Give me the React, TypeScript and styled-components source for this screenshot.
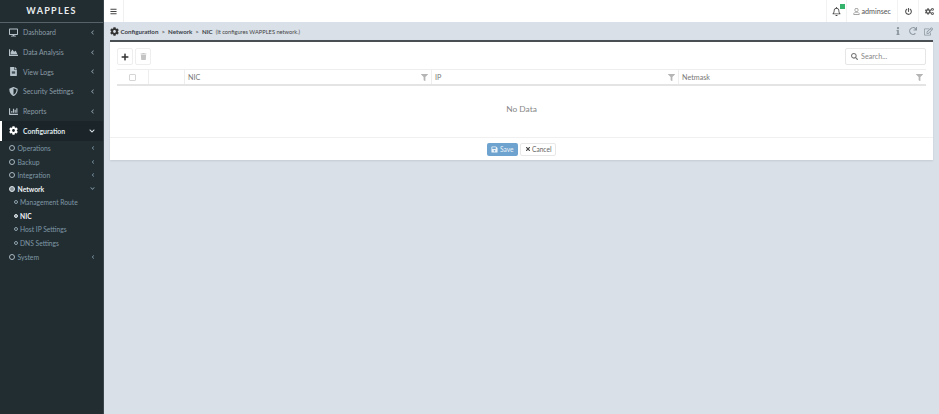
import React from 'react';
import styled, { createGlobalStyle } from 'styled-components';
import {
    FaBars,
    FaRegBell,
    FaChartArea,
    FaChartBar,
    FaCog,
    FaCogs,
    FaChevronLeft,
    FaChevronDown,
    FaDesktop,
    FaFileAlt,
    FaFilter,
    FaPlus,
    FaPowerOff,
    FaRedo,
    FaSave,
    FaSearch,
    FaShieldAlt,
    FaTimes,
    FaTrash,
    FaInfo,
    FaRegUser,
    FaRegEdit,
} from 'react-icons/fa';

const GlobalStyle = createGlobalStyle`
    html, body {
        margin: 0;
        height: 100%;
        background: #d9e0e8;
    }
    #root {
        height: 100%;
    }
    * {
        box-sizing: border-box;
    }
`;

const mainMenu = [
    { label: 'Dashboard', icon: <FaDesktop /> },
    { label: 'Data Analysis', icon: <FaChartArea /> },
    { label: 'View Logs', icon: <FaFileAlt /> },
    { label: 'Security Settings', icon: <FaShieldAlt /> },
    { label: 'Reports', icon: <FaChartBar /> },
];

const App = () => {
    return (
        <Page>
            <GlobalStyle />
            <Sidebar>
                <Logo>WAPPLES</Logo>
                {mainMenu.map((item) => (
                    <MenuItem key={item.label}>
                        <MenuIcon>{item.icon}</MenuIcon>
                        <MenuLabel>{item.label}</MenuLabel>
                        <FaChevronLeft size={5} />
                    </MenuItem>
                ))}
                <MenuItem $active>
                    <MenuIcon $active>
                        <FaCog />
                    </MenuIcon>
                    <MenuLabel>Configuration</MenuLabel>
                    <FaChevronDown size={6} />
                </MenuItem>
                <SubMenu>
                    <SubItem>
                        <Dot />
                        <SubLabel>Operations</SubLabel>
                        <FaChevronLeft size={4} />
                    </SubItem>
                    <SubItem>
                        <Dot />
                        <SubLabel>Backup</SubLabel>
                        <FaChevronLeft size={4} />
                    </SubItem>
                    <SubItem>
                        <Dot />
                        <SubLabel>Integration</SubLabel>
                        <FaChevronLeft size={4} />
                    </SubItem>
                    <SubItem $active>
                        <Dot $active />
                        <SubLabel>Network</SubLabel>
                        <FaChevronDown size={5} color="#7f98a5" />
                    </SubItem>
                    <LeafItem>
                        <SmallDot />
                        Management Route
                    </LeafItem>
                    <LeafItem $active>
                        <SmallDot $active />
                        NIC
                    </LeafItem>
                    <LeafItem>
                        <SmallDot />
                        Host IP Settings
                    </LeafItem>
                    <LeafItem>
                        <SmallDot />
                        DNS Settings
                    </LeafItem>
                    <SubItem>
                        <Dot />
                        <SubLabel>System</SubLabel>
                        <FaChevronLeft size={4} />
                    </SubItem>
                </SubMenu>
            </Sidebar>
            <Main>
                <TopBar>
                    <Hamburger>
                        <FaBars size={7} />
                    </Hamburger>
                    <TopActions>
                        <TopAction $width={20}>
                            <BellWrap>
                                <FaRegBell size={9} />
                                <Badge />
                            </BellWrap>
                        </TopAction>
                        <TopAction $width={51}>
                            <FaRegUser size={7} color="#888" />
                            adminsec
                        </TopAction>
                        <TopAction $width={21}>
                            <FaPowerOff size={7} />
                        </TopAction>
                        <TopAction $width={21}>
                            <FaCogs size={9} />
                        </TopAction>
                    </TopActions>
                </TopBar>
                <Content>
                    <Breadcrumb>
                        <FaCog size={9} color="#333" />
                        <Crumb>Configuration</Crumb>
                        <CrumbSep>&gt;</CrumbSep>
                        <Crumb>Network</Crumb>
                        <CrumbSep>&gt;</CrumbSep>
                        <Crumb>NIC</Crumb>
                        <CrumbNote>(It configures WAPPLES network.)</CrumbNote>
                        <PageTools>
                            <FaInfo size={8} />
                            <FaRedo size={8} />
                            <FaRegEdit size={9} />
                        </PageTools>
                    </Breadcrumb>
                    <Card>
                        <CardBody>
                            <Toolbar>
                                <ToolButton>
                                    <FaPlus size={8} color="#333" />
                                </ToolButton>
                                <ToolButton>
                                    <FaTrash size={7} color="#c4c4c4" />
                                </ToolButton>
                                <SearchBox>
                                    <FaSearch size={7} color="#777" />
                                    Search...
                                </SearchBox>
                            </Toolbar>
                            <TableHead>
                                <CheckCell>
                                    <CheckBox />
                                </CheckCell>
                                <BlankCell />
                                <HeadCell>
                                    NIC
                                    <FaFilter size={7} color="#b5b5b5" />
                                </HeadCell>
                                <HeadCell>
                                    IP
                                    <FaFilter size={7} color="#b5b5b5" />
                                </HeadCell>
                                <HeadCell>
                                    Netmask
                                    <FaFilter size={7} color="#b5b5b5" />
                                </HeadCell>
                            </TableHead>
                            <NoData>No Data</NoData>
                        </CardBody>
                        <Footer>
                            <SaveButton>
                                <FaSave size={7} />
                                Save
                            </SaveButton>
                            <CancelButton>
                                <FaTimes size={6} color="#444" />
                                Cancel
                            </CancelButton>
                        </Footer>
                    </Card>
                </Content>
            </Main>
        </Page>
    );
};

export default App;

const Page = styled.div`
    display: flex;
    height: 414px;
    width: 939px;
    overflow: hidden;
    font-family: 'Lato', 'Noto Sans', 'Liberation Sans', sans-serif;
`;

const Sidebar = styled.div`
    width: 104px;
    flex-shrink: 0;
    background: #222d32;
    border-right: 1px solid #3a444b;
    color: #8a9ba4;
    font-size: 6.9px;
`;

const Logo = styled.div`
    height: 22.5px;
    display: flex;
    align-items: center;
    justify-content: center;
    color: #e8ecee;
    font-size: 9px;
    font-weight: 700;
    letter-spacing: 1.3px;
    border-bottom: 1px solid #56626a;
    background: #222d32;
`;

const MenuItem = styled.div<{ $active?: boolean }>`
    height: 19.7px;
    display: flex;
    align-items: center;
    padding: 0 8px 0 ${({ $active }) => ($active ? '7px' : '9px')};
    border-left: ${({ $active }) => ($active ? '2px solid #fff' : 'none')};
    background: ${({ $active }) => ($active ? '#1b2429' : 'transparent')};
    color: ${({ $active }) => ($active ? '#dfe6ea' : '#8a9ba4')};
    font-weight: ${({ $active }) => ($active ? 700 : 400)};
`;

const MenuIcon = styled.span<{ $active?: boolean }>`
    width: 14px;
    display: flex;
    font-size: 9px;
    color: ${({ $active }) => ($active ? '#fff' : '#b5c2c9')};
`;

const MenuLabel = styled.span`
    flex: 1;
    white-space: nowrap;
`;

const SubMenu = styled.div`
    padding-top: 0.5px;
`;

const SubItem = styled.div<{ $active?: boolean }>`
    height: 13.6px;
    display: flex;
    align-items: center;
    padding: 0 8px 0 9px;
    font-size: 6.8px;
    color: ${({ $active }) => ($active ? '#eef2f4' : '#7f98a5')};
    font-weight: ${({ $active }) => ($active ? 700 : 400)};
`;

const SubLabel = styled.span`
    flex: 1;
`;

const Dot = styled.span<{ $active?: boolean }>`
    width: 6px;
    height: 6px;
    margin-right: 2.5px;
    border-radius: 50%;
    border: 1.2px solid ${({ $active }) => ($active ? '#dfe6ea' : '#a9b8c0')};
    background: ${({ $active }) => ($active ? '#8c979d' : 'transparent')};
`;

const LeafItem = styled.div<{ $active?: boolean }>`
    height: 13.6px;
    display: flex;
    align-items: center;
    padding-left: 13.5px;
    font-size: 6.7px;
    white-space: nowrap;
    color: ${({ $active }) => ($active ? '#f0f3f5' : '#7f98a5')};
    font-weight: ${({ $active }) => ($active ? 700 : 400)};
`;

const SmallDot = styled.span<{ $active?: boolean }>`
    width: 4px;
    height: 4px;
    margin-right: 2.5px;
    border-radius: 50%;
    border: 1px solid ${({ $active }) => ($active ? '#dfe6ea' : '#8fa3ad')};
    background: ${({ $active }) => ($active ? '#8c979d' : 'transparent')};
`;

const Main = styled.div`
    flex: 1;
    display: flex;
    flex-direction: column;
    min-width: 0;
`;

const TopBar = styled.div`
    height: 22px;
    background: #fff;
    display: flex;
    justify-content: space-between;
`;

const Hamburger = styled.div`
    width: 20px;
    display: flex;
    align-items: center;
    justify-content: center;
    color: #444;
    border-right: 1px solid #f0f0f0;
`;

const TopActions = styled.div`
    display: flex;
`;

const TopAction = styled.div<{ $width: number }>`
    width: ${({ $width }) => $width}px;
    display: flex;
    align-items: center;
    justify-content: center;
    gap: 1.5px;
    border-left: 1px solid #f2f2f2;
    font-size: 7.2px;
    color: #555;
`;

const BellWrap = styled.span`
    position: relative;
    display: flex;
    color: #444;
`;

const Badge = styled.span`
    position: absolute;
    top: -3px;
    right: -4px;
    width: 5px;
    height: 5px;
    background: #35b26b;
`;

const Content = styled.div`
    padding: 0 6px 0 6px;
`;

const Breadcrumb = styled.div`
    height: 18px;
    display: flex;
    align-items: center;
    gap: 1.5px;
    font-size: 6.2px;
    color: #333;
    white-space: nowrap;
`;

const Crumb = styled.span`
    font-weight: 700;
    color: #3a4148;
`;

const CrumbSep = styled.span`
    margin: 0 1.5px;
`;

const CrumbNote = styled.span`
    margin-left: 1.5px;
    color: #444;
    font-size: 5.7px;
`;

const PageTools = styled.div`
    margin-left: auto;
    display: flex;
    align-items: center;
    gap: 7px;
    color: #8b969e;
`;

const Card = styled.div`
    background: #fff;
    border-top: 2px solid #4a4f54;
    box-shadow: 0 1px 2px rgba(0, 0, 0, 0.1);
`;

const CardBody = styled.div`
    padding: 6px 7px 0 7px;
`;

const Toolbar = styled.div`
    display: flex;
    gap: 2px;
    height: 17px;
`;

const ToolButton = styled.div`
    width: 16px;
    height: 17px;
    display: flex;
    align-items: center;
    justify-content: center;
    border: 1px solid #eeeeee;
    border-radius: 2px;
    background: #fff;
`;

const SearchBox = styled.div`
    margin-left: auto;
    width: 81px;
    display: flex;
    align-items: center;
    gap: 3px;
    padding-left: 5px;
    border: 1px solid #e6e6e6;
    border-radius: 2px;
    font-size: 7.2px;
    color: #888;
`;

const TableHead = styled.div`
    margin-top: 4px;
    height: 17px;
    display: grid;
    grid-template-columns: 32px 36px 1fr 1fr 1fr;
    border-top: 1px solid #eee;
    border-bottom: 2px solid #e4e4e4;
`;

const CheckCell = styled.div`
    display: flex;
    align-items: center;
    justify-content: center;
    border-right: 1px solid #eee;
`;

const CheckBox = styled.span`
    width: 7px;
    height: 7px;
    border: 1px solid #d5d5d5;
    border-radius: 1px;
`;

const BlankCell = styled.div`
    border-right: 1px solid #eee;
`;

const HeadCell = styled.div`
    display: flex;
    align-items: center;
    justify-content: space-between;
    padding: 0 3px;
    border-right: 1px solid #eee;
    font-size: 7.2px;
    color: #777;

    &:last-child {
        border-right: none;
    }
`;

const NoData = styled.div`
    height: 45px;
    margin-bottom: 6px;
    display: flex;
    align-items: center;
    justify-content: center;
    font-size: 8.4px;
    color: #888;
`;

const Footer = styled.div`
    height: 23px;
    display: flex;
    align-items: center;
    justify-content: center;
    gap: 2px;
    border-top: 1px solid #f0f0f0;
`;

const SaveButton = styled.div`
    width: 31px;
    height: 13px;
    display: flex;
    align-items: center;
    justify-content: center;
    gap: 1.5px;
    background: #6fa3cf;
    border-radius: 2px;
    color: #eaf2f8;
    font-size: 6.6px;
`;

const CancelButton = styled.div`
    width: 36px;
    height: 13px;
    display: flex;
    align-items: center;
    justify-content: center;
    gap: 1.5px;
    background: #fff;
    border: 1px solid #e8e8e8;
    border-radius: 2px;
    color: #666;
    font-size: 6.6px;
`;
